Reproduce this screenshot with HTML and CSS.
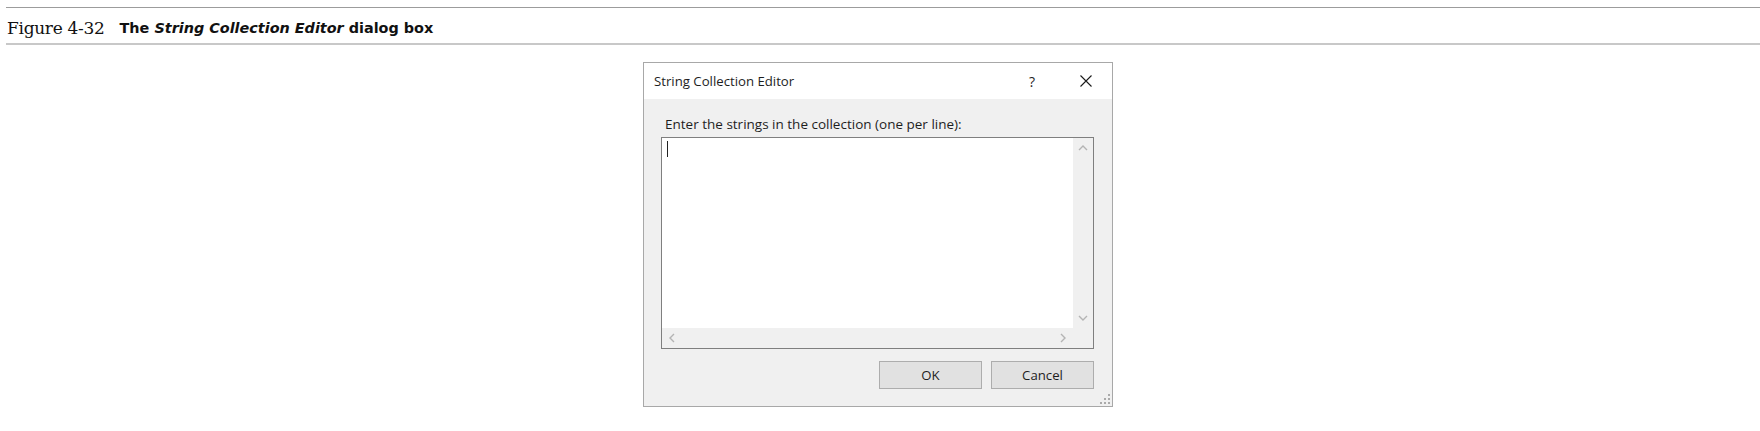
FILE: index.html
```html
<!DOCTYPE html>
<html lang="en">
<head>
<meta charset="utf-8">
<title>Figure 4-32</title>
<link rel="stylesheet" href="styles.css">
</head>
<body>
<header class="fig-head">
  <span class="fig-num">Figure 4-32</span>
  <span class="fig-cap">The <em>String Collection Editor</em> dialog box</span>
</header>

<main class="stage">
  <section class="dialog">
    <div class="titlebar">
      <span class="title">String Collection Editor</span>
      <span class="tb-btn tb-help">?</span>
      <span class="tb-btn tb-close">
        <svg width="12" height="12" viewBox="0 0 12 12"><path d="M0.5 0.5L11.5 11.5M11.5 0.5L0.5 11.5" stroke="#1a1a1a" stroke-width="1.1" fill="none"/></svg>
      </span>
    </div>
    <div class="body">
      <div class="label">Enter the strings in the collection (one per line):</div>
      <div class="textbox">
        <div class="text-area"><span class="caret"></span></div>
        <div class="vscroll">
          <span class="sb-btn"><svg width="10" height="6" viewBox="0 0 10 6"><path d="M1 5L5 1L9 5" stroke="#b4b4b4" stroke-width="1.4" fill="none"/></svg></span>
          <span class="sb-btn"><svg width="10" height="6" viewBox="0 0 10 6"><path d="M1 1L5 5L9 1" stroke="#b4b4b4" stroke-width="1.4" fill="none"/></svg></span>
        </div>
        <div class="hscroll">
          <span class="sb-btn"><svg width="6" height="10" viewBox="0 0 6 10"><path d="M5 1L1 5L5 9" stroke="#b4b4b4" stroke-width="1.4" fill="none"/></svg></span>
          <span class="sb-btn"><svg width="6" height="10" viewBox="0 0 6 10"><path d="M1 1L5 5L1 9" stroke="#b4b4b4" stroke-width="1.4" fill="none"/></svg></span>
        </div>
        <div class="corner"></div>
      </div>
      <div class="buttons">
        <span class="btn">OK</span>
        <span class="btn">Cancel</span>
      </div>
      <svg class="grip" width="12" height="12" viewBox="0 0 12 12">
        <rect x="9" y="1" width="2" height="2" fill="#aaa"/>
        <rect x="9" y="5" width="2" height="2" fill="#aaa"/>
        <rect x="5" y="5" width="2" height="2" fill="#aaa"/>
        <rect x="9" y="9" width="2" height="2" fill="#aaa"/>
        <rect x="5" y="9" width="2" height="2" fill="#aaa"/>
        <rect x="1" y="9" width="2" height="2" fill="#aaa"/>
      </svg>
    </div>
  </section>
</main>
</body>
</html>
```

FILE: styles.css
```css
html, body {
  margin: 0;
  padding: 0;
  background: #ffffff;
}

.fig-head {
  margin: 7px 0 0 6px;
  border-top: 1px solid #9c9c9c;
  border-bottom: 2px solid #c8c8c8;
  height: 35px;
  box-sizing: content-box;
  display: flex;
  align-items: baseline;
}

.fig-num {
  font-family: "DejaVu Serif", "Liberation Serif", serif;
  font-size: 17px;
  letter-spacing: -0.3px;
  line-height: 24px;
  margin-top: 8px;
  padding-left: 1px;
  color: #111;
}

.fig-cap {
  font-family: "DejaVu Sans", "Liberation Sans", sans-serif;
  font-weight: bold;
  font-size: 14.4px;
  margin-left: 15px;
  color: #111;
  position: relative;
  top: -1px;
}

.fig-cap em {
  font-style: italic;
}

.stage {
  display: flex;
  justify-content: center;
  padding-top: 17px;
  padding-right: 4px;
}

.dialog {
  width: 468px;
  border: 1px solid #a8a8a8;
  background: #f0f0f0;
  font-family: "Open Sans", "Noto Sans", sans-serif;
  font-size: 13.2px;
  color: #1e1e1e;
}

.titlebar {
  height: 36px;
  background: #ffffff;
  display: flex;
  align-items: center;
}

.title {
  flex: 1;
  padding-left: 10px;
  line-height: 36px;
}

.tb-btn {
  display: flex;
  align-items: center;
  justify-content: center;
  height: 36px;
}

.tb-help {
  width: 56px;
  font-size: 14px;
}

.tb-close {
  width: 52px;
}

.body {
  position: relative;
  padding: 17px 18px 17px 17px;
}

.label {
  font-size: 13.5px;
  line-height: 16px;
  height: 16px;
  padding-left: 4px;
  margin-bottom: 5px;
}

.textbox {
  height: 210px;
  border: 1px solid #7f7f7f;
  display: grid;
  grid-template-columns: 1fr 20px;
  grid-template-rows: 1fr 20px;
  background: #ffffff;
}

.text-area {
  padding: 3px 0 0 5px;
}

.caret {
  display: block;
  width: 1px;
  height: 16px;
  background: #222;
}

.vscroll {
  background: #f0f0f0;
  display: flex;
  flex-direction: column;
  justify-content: space-between;
}

.hscroll {
  background: #f0f0f0;
  display: flex;
  justify-content: space-between;
}

.corner {
  background: #f0f0f0;
}

.sb-btn {
  width: 20px;
  height: 20px;
  display: flex;
  align-items: center;
  justify-content: center;
}

.buttons {
  display: flex;
  justify-content: flex-end;
  gap: 9px;
  margin-top: 12px;
}

.btn {
  width: 101px;
  height: 26px;
  border: 1px solid #adadad;
  background: #e1e1e1;
  display: flex;
  align-items: center;
  justify-content: center;
}

.grip {
  position: absolute;
  right: 1px;
  bottom: 1px;
}
```
